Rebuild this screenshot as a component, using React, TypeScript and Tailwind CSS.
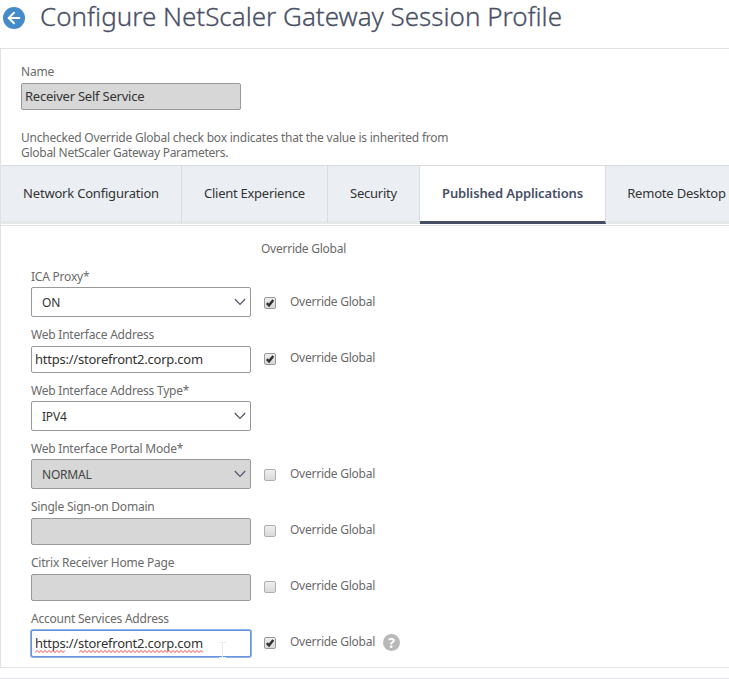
import { ArrowLeft } from 'lucide-react'
import clsx from 'clsx'

const tabs = [
  { name: 'Network Configuration', width: 'w-[181px]', text: 'tracking-[-0.2px]' },
  { name: 'Client Experience', width: 'w-[146px]', text: 'tracking-[-0.27px]' },
  { name: 'Security', width: 'w-[92px]', text: 'tracking-[-0.25px]' },
  { name: 'Published Applications', width: 'w-[186px]', text: 'tracking-[-0.13px]' },
  { name: 'Remote Desktop', width: 'w-[142px]', text: 'tracking-[-0.2px]' },
]

interface Field {
  label: string
  kind: 'select' | 'input'
  value?: string
  disabled?: boolean
  focused?: boolean
  override?: boolean
  help?: boolean
}

const fields: Field[] = [
  { label: 'ICA Proxy*', kind: 'select', value: 'ON', override: true },
  { label: 'Web Interface Address', kind: 'input', value: 'https://storefront2.corp.com', override: true },
  { label: 'Web Interface Address Type*', kind: 'select', value: 'IPV4' },
  { label: 'Web Interface Portal Mode*', kind: 'select', value: 'NORMAL', disabled: true, override: false },
  { label: 'Single Sign-on Domain', kind: 'input', disabled: true, override: false },
  { label: 'Citrix Receiver Home Page', kind: 'input', disabled: true, override: false },
  {
    label: 'Account Services Address',
    kind: 'input',
    value: 'https://storefront2.corp.com',
    focused: true,
    override: true,
    help: true,
  },
]

function Checkbox({ checked }: { checked: boolean }) {
  return (
    <span
      className={clsx(
        'block h-3 w-3 shrink-0 rounded-[2px] border bg-gradient-to-b from-[#eeeeee] to-[#d9d9d9]',
        checked ? 'border-[#999999]' : 'border-[#b0b0b0]'
      )}
    >
      {checked && (
        <svg viewBox="0 0 10 10" className="block h-[10px] w-[10px]">
          <path d="M1.8 5.2 L4 7.3 L8.3 2" fill="none" stroke="#333333" strokeWidth="2.5" />
        </svg>
      )}
    </span>
  )
}

function Squiggle({ className, width }: { className: string; width: number }) {
  let d = 'M0 2.5'
  for (let x = 2; x <= width; x += 2) d += ` L${x} ${x % 4 === 2 ? 0.5 : 2.5}`
  return (
    <svg width={width} height="3" className={clsx('absolute', className)}>
      <path d={d} fill="none" stroke="#f04545" strokeWidth="1" />
    </svg>
  )
}

function Control({ field }: { field: Field }) {
  if (field.kind === 'select') {
    return (
      <div
        className={clsx(
          'flex h-[30px] w-[220px] items-center justify-between rounded-[2px] border border-[#999999] pr-1 pl-[10px]',
          field.disabled ? 'bg-[#d7d7d7] text-[#444444]' : 'bg-white text-[#333333]'
        )}
      >
        <span className="pt-0.5 text-[12px] tracking-[-0.2px]">{field.value}</span>
        <svg viewBox="0 0 12 8" className="h-2 w-3">
          <path d="M0.8 1 L6 6.5 L11.2 1" fill="none" stroke="#4b5268" strokeWidth="1.1" />
        </svg>
      </div>
    )
  }

  return (
    <div
      className={clsx(
        'relative mt-px flex h-[27px] w-[220px] items-center rounded-[2px] border pl-[3px] text-[13px] tracking-[-0.23px] text-[#333333]',
        field.disabled ? 'bg-[#d7d7d7]' : 'bg-white',
        field.focused ? 'border-[#6593dc] shadow-[0_0_0_1px_#8fb1e8]' : 'border-[#999999]'
      )}
    >
      {field.value}
      {field.focused && (
        <>
          <Squiggle className="top-[19px] left-[3px]" width={31} />
          <Squiggle className="top-[19px] left-[47px]" width={124} />
          {/* Text cursor */}
          <svg viewBox="0 0 7 16" className="absolute top-[11px] left-[187px] h-4 w-[7px]">
            <path d="M0 0.5 H7 M3.5 0 V16 M0 15.5 H7" fill="none" stroke="#ebebeb" strokeWidth="1" />
          </svg>
        </>
      )}
    </div>
  )
}

function FieldRow({ field }: { field: Field }) {
  const isSelect = field.kind === 'select'
  return (
    <div className="mb-2">
      <div className="h-5 text-[12px] leading-5 tracking-[-0.22px] text-[#6a6a6a]">{field.label}</div>
      <div className="flex">
        <Control field={field} />
        {field.override !== undefined && (
          <div className={clsx('ml-[13px] flex h-4 items-center', isSelect ? 'mt-[7px]' : 'mt-[5px]')}>
            <div className="pt-[2px]">
              <Checkbox checked={field.override} />
            </div>
            <span className="ml-[14px] text-[12px] leading-4 tracking-[-0.25px] text-[#6a6a6a]">Override Global</span>
            {field.help && (
              <span className="ml-2 flex h-[17px] w-[17px] items-center justify-center rounded-full bg-[#b8b8b8] text-[14px] font-bold text-white">
                ?
              </span>
            )}
          </div>
        )}
      </div>
    </div>
  )
}

export default function App() {
  return (
    <div className="h-[679px] w-[729px] overflow-hidden bg-white font-['Noto_Sans',sans-serif] whitespace-nowrap">
      {/* Page title */}
      <header className="flex h-12 items-start pl-[3px]">
        <span className="mt-[7px] flex h-[22px] w-[22px] items-center justify-center rounded-full bg-[#448bca]">
          <ArrowLeft className="h-[18px] w-[18px] text-white" strokeWidth={2.7} />
        </span>
        <h1 className="ml-[15px] text-[26px] leading-[33px] font-light text-[#4a5066] [-webkit-text-stroke:0.3px_#4a5066]">
          Configure NetScaler Gateway Session Profile
        </h1>
      </header>

      {/* Profile name and tabs */}
      <section className="h-[177px] border-t border-l border-[#dfe2e6]">
        <div className="h-[116px] pt-[13px] pl-5 text-[12px] tracking-[-0.22px] text-[#6a6a6a]">
          <div className="h-[21px] leading-5">Name</div>
          <div className="flex h-[27px] w-[220px] items-center rounded-[2px] border border-[#999999] bg-[#d7d7d7] pl-[3px] text-[13px] tracking-[-0.23px] text-[#333333]">
            Receiver Self Service
          </div>
          <div className="mt-[20px] leading-[15px]">
            <p>Unchecked Override Global check box indicates that the value is inherited from</p>
            <p className="tracking-[-0.27px]">Global NetScaler Gateway Parameters.</p>
          </div>
        </div>
        <nav className="flex h-[59px] border-t border-[#d9dcdf]">
          {tabs.map((tab) => {
            const active = tab.name === 'Published Applications'
            return (
              <div
                key={tab.name}
                className={clsx(
                  'flex shrink-0 items-center justify-center border-r border-b-[3px] border-r-[#d9dcdf] text-[13px]',
                  tab.width,
                  tab.text,
                  active
                    ? 'border-b-[#464e65] bg-white font-semibold text-[#464e65]'
                    : 'border-b-[#e6e7e8] bg-[#ebeff4] text-[#333333]'
                )}
              >
                {tab.name}
              </div>
            )
          })}
        </nav>
      </section>

      {/* Published applications settings */}
      <section className="h-[443px] border border-r-0 border-[#e0e2e5] pl-[30px]">
        <div className="h-[41px] pt-[13px] pl-[230px] text-[12px] leading-5 tracking-[-0.25px] text-[#6a6a6a]">
          Override Global
        </div>
        {fields.map((field) => (
          <FieldRow key={field.label} field={field} />
        ))}
      </section>
      <div className="mt-[10px] border-t border-[#e0e2e5]" />
    </div>
  )
}
